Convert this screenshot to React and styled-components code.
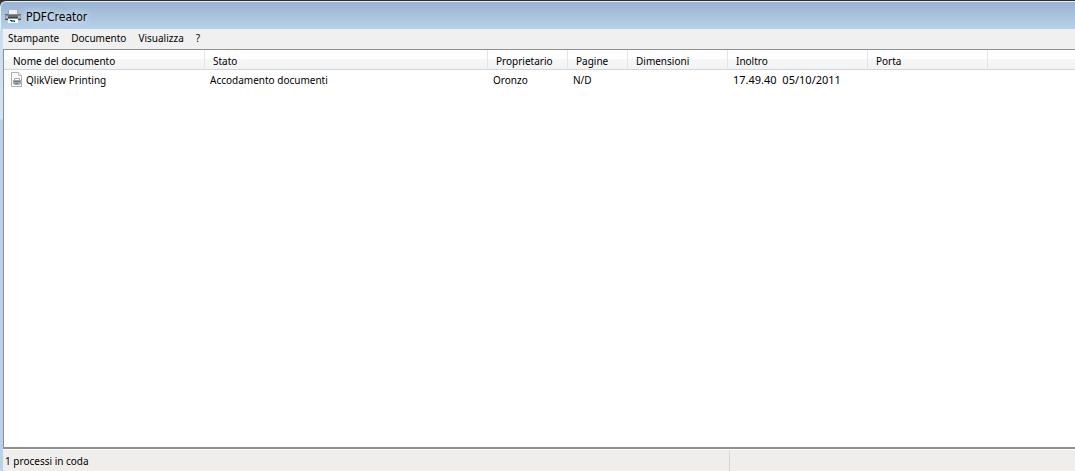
import React from "react";
import styled, { createGlobalStyle } from "styled-components";

const GlobalStyle = createGlobalStyle`
  * { box-sizing: border-box; }
  body {
    margin: 0;
    background: #3c3a40;
    color: #000;
    font-family: "Noto Sans", "Open Sans", sans-serif;
    font-size: 10px;
    line-height: 16px;
  }
`;

const Window = styled.div`
  display: flex;
  flex-direction: column;
  min-height: 100vh;
  border-top: 1px solid #302f36;
`;

const TitleBar = styled.header`
  display: flex;
  align-items: center;
  gap: 5px;
  height: 28px;
  padding: 2px 4px 0;
  border-top: 1px solid #e6eef7;
  border-left: 1px solid #e6eef7;
  border-top-left-radius: 6px;
  background: linear-gradient(#99b4d1, #b9d1ea);
`;

const Title = styled.h1`
  margin: 0;
  font-family: "DejaVu Sans Condensed", "DejaVu Sans", sans-serif;
  font-size: 12px;
  font-weight: 400;
  text-shadow: 0 0 6px #dce8f4, 0 0 6px #dce8f4;
`;

const Frame = styled.div`
  display: flex;
  flex: 1;
  flex-direction: column;
  padding-left: 3px;
  background: linear-gradient(#c9dcf0 0, #d3e3f4 90px, #b9d1ea 91px);
`;

const MenuBar = styled.nav`
  display: flex;
  gap: 12px;
  height: 20px;
  padding: 0 5px 2px;
  background: #f0f0f0;
`;

const MenuButton = styled.button`
  padding: 0;
  border: 0;
  background: none;
  color: inherit;
  font: inherit;
`;

const ListPane = styled.main`
  flex: 1;
  border: solid #8e8f8f;
  border-width: 1px 0 2px 1px;
  background: #fff;
`;

const QueueTable = styled.table`
  width: 100%;
  table-layout: fixed;
  border-collapse: separate;
  border-spacing: 0;
`;

const Column = styled.col`
  width: ${({ $width }) => $width}px;
`;

const HeaderCell = styled.th`
  height: 20px;
  padding: 2px 0 0 ${({ $first }) => ($first ? 9 : 8)}px;
  border-right: ${({ $last }) => ($last ? 0 : 1)}px solid #e3e5e7;
  border-bottom: 1px solid #d5d5d5;
  background: linear-gradient(#fff 45%, #f6f7f9 46%, #f2f3f5);
  font-weight: 400;
  text-align: left;
  white-space: nowrap;
`;

const Cell = styled.td`
  height: 20px;
  padding: 0 0 0 5px;
  font-size: ${({ $figures }) => ($figures ? 11 : 10)}px;
  white-space: pre;
`;

const DocumentName = styled.div`
  display: flex;
  align-items: center;
  gap: 3px;
`;

const StatusBar = styled.footer`
  display: flex;
  height: 22px;
  border-top: 1px solid #fff;
  background: #f0eded;
`;

const StatusText = styled.div`
  flex: 0 0 67.8%;
  padding: 3px 2px;
  border-right: 1px solid #d7d7d7;
`;

const PrinterIcon = () => (
  <svg width="16" height="16" viewBox="0 0 16 16" shapeRendering="crispEdges" aria-hidden="true">
    <path fill="#eef1f4" d="M3 1h10v5H3z" />
    <path fill="#a3a8ae" d="M3 1h1v4H3zM12 1h1v4h-1z" />
    <path fill="#8d9196" d="M0 5h16v6H0z" />
    <path fill="#686b70" d="M0 5h3v1H0zM13 5h3v1h-3zM3 6h10v2H3z" />
    <path fill="#45484d" d="M3 8h10v1H3zM0 10h16v1H0z" />
    <path fill="#b7babf" d="M1 7h2v2H1zM13 7h2v2h-2z" />
    <path fill="#f8fafc" d="M3 10h10v4H3z" />
    <path fill="#3597d2" d="M6 11h4v2H6z" />
    <path fill="#173a7c" d="M5 11h2v1H5zM9 12h1v1H9z" />
    <path fill="#42b28a" d="M8 11h2v1H8z" />
  </svg>
);

const DocumentIcon = () => (
  <svg width="14" height="16" viewBox="0 0 14 16" aria-hidden="true">
    <path fill="#fafafa" stroke="#b0b0b0" d="M2.500.500h7l3 3v11h-10z" />
    <path fill="#e8e8e8" stroke="#c2c2c2" d="M9.500.500v3h3" />
    <path fill="#fff" stroke="#aaa" d="M5.500 6.500h5v2h-5z" />
    <path fill="#a4a6a8" d="M4 8h8v4H4z" />
    <path fill="#74777b" d="M5 9h6v1H5z" />
    <path fill="#fff" stroke="#aaa" d="M5.500 11.500h5v1h-5z" />
    <path fill="#32a6a4" d="M6 11h3v1H6z" />
  </svg>
);

const menus = ["Stampante", "Documento", "Visualizza", "?"];

const columns = [
  { label: "Nome del documento", width: 201 },
  { label: "Stato", width: 283 },
  { label: "Proprietario", width: 80 },
  { label: "Pagine", width: 60 },
  { label: "Dimensioni", width: 100 },
  { label: "Inoltro", width: 140 },
  { label: "Porta", width: 120 },
  { label: "" },
];

const job = ["Accodamento documenti", "Oronzo", "N/D", "", "17.49.40  05/10/2011", "", ""];

export default function App() {
  return (
    <Window>
      <GlobalStyle />
      <TitleBar>
        <PrinterIcon />
        <Title>PDFCreator</Title>
      </TitleBar>
      <Frame>
        <MenuBar>
          {menus.map((menu) => (
            <MenuButton key={menu} type="button">{menu}</MenuButton>
          ))}
        </MenuBar>
        <ListPane>
          <QueueTable>
            <colgroup>
              {columns.map(({ label, width }) =>
                width ? <Column key={label} $width={width} /> : <col key="rest" />
              )}
            </colgroup>
            <thead>
              <tr>
                {columns.map(({ label }, i) => (
                  <HeaderCell key={label} $first={i === 0} $last={!label}>{label}</HeaderCell>
                ))}
              </tr>
            </thead>
            <tbody>
              <tr>
                <Cell>
                  <DocumentName>
                    <DocumentIcon />
                    QlikView Printing
                  </DocumentName>
                </Cell>
                {job.map((value, i) => <Cell key={i} $figures={/^\d/.test(value)}>{value}</Cell>)}
              </tr>
            </tbody>
          </QueueTable>
        </ListPane>
        <StatusBar>
          <StatusText>1 processi in coda</StatusText>
        </StatusBar>
      </Frame>
    </Window>
  );
}
